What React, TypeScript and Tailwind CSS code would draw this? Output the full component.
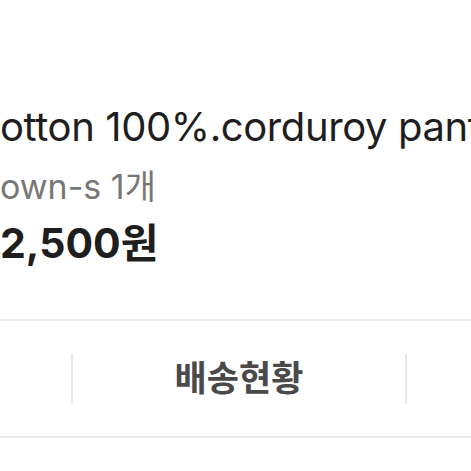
export default function App() {
  return (
    <div
      className="w-[471px] h-[471px] bg-white overflow-hidden flex flex-col"
      style={{ fontFamily: 'Inter, "Noto Sans CJK KR", sans-serif' }}
    >
      <div className="pt-[101px] flex flex-col">
        <div className="whitespace-nowrap text-[40px] leading-[52px] text-[#1e1e1e] tracking-[-0.4px]">
          otton 100%.corduroy pants
        </div>
        <div className="mt-[8px] whitespace-nowrap text-[34px] leading-[52px] text-[#777777]">
          own-s 1개
        </div>
        <div className="mt-[4px] whitespace-nowrap text-[41px] leading-[52px] font-bold text-[#1e1e1e]">
          2,500원
        </div>
      </div>
      <div className="mt-[50px] border-t-2 border-b-2 border-[#ebebeb] h-[119px] flex items-center">
        <div className="w-[71px]" />
        <div className="w-[2px] h-[50px] bg-[#e6e6e6]" />
        <div className="flex-1 text-center text-[35px] font-bold text-[#4a4a4a]">배송현황</div>
        <div className="w-[2px] h-[50px] bg-[#e6e6e6]" />
        <div className="w-[64px]" />
      </div>
    </div>
  );
}
